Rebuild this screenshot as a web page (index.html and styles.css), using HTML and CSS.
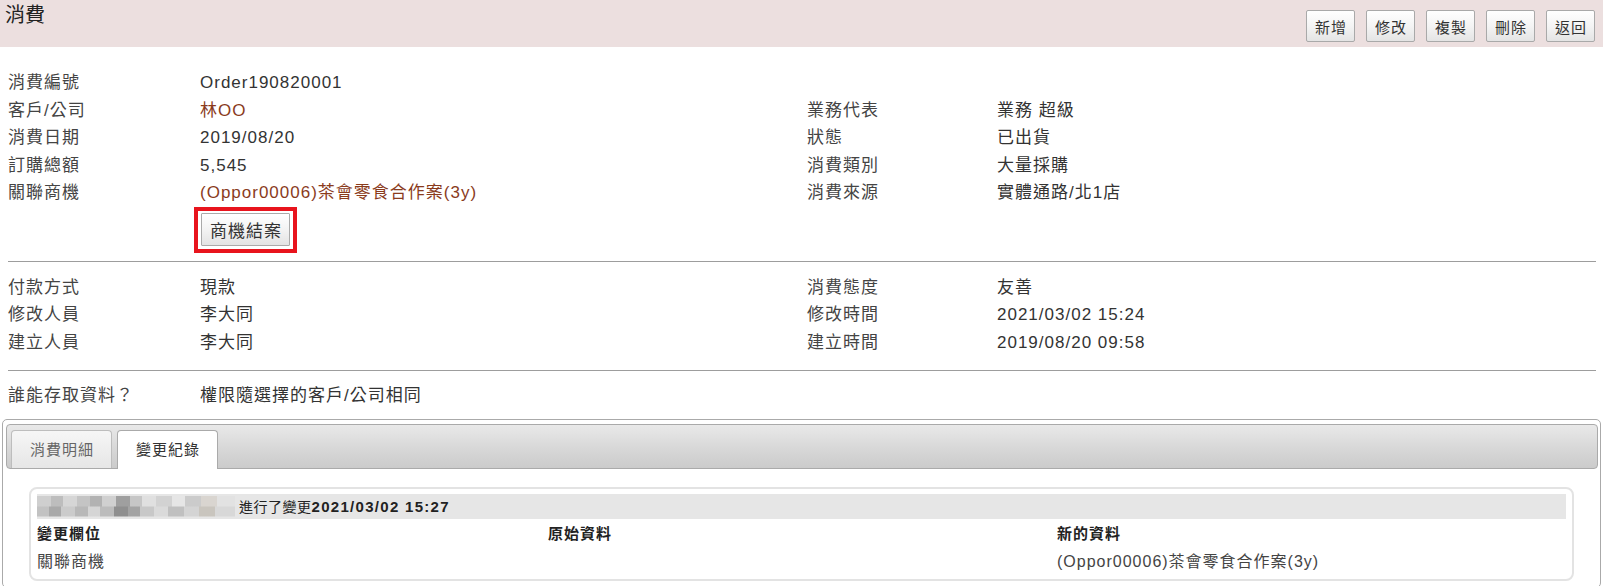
FILE: index.html
```html
<!DOCTYPE html>
<html lang="zh-Hant">
<head>
<meta charset="utf-8">
<title>消費</title>
<link rel="stylesheet" href="styles.css">
</head>
<body>
<header class="topbar">
  <h1 class="title">消費</h1>
  <div class="actions">
    <button class="btn">新增</button>
    <button class="btn">修改</button>
    <button class="btn">複製</button>
    <button class="btn">刪除</button>
    <button class="btn">返回</button>
  </div>
</header>

<main class="info">
  <section class="grid first">
    <div class="lbl">消費編號</div><div class="val">Order190820001</div><div class="lbl"></div><div class="val"></div>
    <div class="lbl">客戶/公司</div><div class="val"><a class="link">林OO</a></div><div class="lbl">業務代表</div><div class="val">業務 超級</div>
    <div class="lbl">消費日期</div><div class="val">2019/08/20</div><div class="lbl">狀態</div><div class="val">已出貨</div>
    <div class="lbl">訂購總額</div><div class="val">5,545</div><div class="lbl">消費類別</div><div class="val">大量採購</div>
    <div class="lbl">關聯商機</div><div class="val"><a class="link">(Oppor00006)茶會零食合作案(3y)</a></div><div class="lbl">消費來源</div><div class="val">實體通路/北1店</div>
    <div class="action-cell"><span class="highlight"><button class="btn-close">商機結案</button></span></div>
  </section>
  <hr class="divider d1">
  <section class="grid second">
    <div class="lbl">付款方式</div><div class="val">現款</div><div class="lbl">消費態度</div><div class="val">友善</div>
    <div class="lbl">修改人員</div><div class="val">李大同</div><div class="lbl">修改時間</div><div class="val">2021/03/02 15:24</div>
    <div class="lbl">建立人員</div><div class="val">李大同</div><div class="lbl">建立時間</div><div class="val">2019/08/20 09:58</div>
  </section>
  <hr class="divider d2">
  <section class="grid third">
    <div class="lbl">誰能存取資料？</div><div class="val">權限隨選擇的客戶/公司相同</div>
  </section>
</main>

<div class="tabs">
  <div class="tabbar">
    <div class="tab">消費明細</div>
    <div class="tab active">變更紀錄</div>
  </div>
  <div class="panel">
    <div class="log">
      <div class="log-head">
        <span class="blur"></span>
        <span class="log-text">進行了變更</span><b class="log-date">2021/03/02 15:27</b>
      </div>
      <div class="log-table">
        <div class="th">變更欄位</div><div class="th">原始資料</div><div class="th">新的資料</div>
        <div class="td">關聯商機</div><div class="td"></div><div class="td">(Oppor00006)茶會零食合作案(3y)</div>
      </div>
    </div>
  </div>
</div>
</body>
</html>
```
FILE: styles.css
```css
* { box-sizing: border-box; }

body {
  margin: 0;
  font-family: "Liberation Sans", "Noto Sans CJK TC", sans-serif;
  color: #333;
  background: #fff;
}

.topbar {
  height: 47px;
  background: #ecdfdf;
  display: flex;
  justify-content: space-between;
  align-items: flex-start;
  margin-right: 1px;
}

.title {
  margin: 0;
  padding: 3px 0 0 5px;
  font-size: 20px;
  line-height: 24px;
  font-weight: normal;
  color: #222;
}

.actions {
  display: flex;
  gap: 11px;
  margin: 10px 8px 0 0;
}

.btn {
  height: 32px;
  padding: 0 7px 0 8px;
  font-family: inherit;
  font-size: 15px;
  letter-spacing: 1px;
  color: #333;
  border: 1px solid #a9a9a9;
  border-radius: 2px;
  background: linear-gradient(#ffffff, #f4f4f4 50%, #e4e4e4);
}

.info {
  padding: 22px 8px 0 8px;
  font-size: 17px;
  letter-spacing: 1px;
}

.grid {
  display: grid;
  grid-template-columns: 192px 607px 190px 1fr;
  line-height: 27.5px;
}

.lbl { color: #444; white-space: nowrap; }
.val { color: #333; white-space: nowrap; }

.link { color: #8a3b1c; text-decoration: none; }

.action-cell {
  grid-column: 2 / span 3;
  margin-top: 0;
  height: 48px;
}

.highlight {
  display: inline-block;
  margin-left: -6px;
  border: 4px solid #e8141d;
  padding: 2px 3px 3px 3px;
  line-height: 0;
}

.btn-close {
  height: 33px;
  padding: 0 7px 0 8px;
  font-family: inherit;
  font-size: 17px;
  letter-spacing: 1px;
  color: #333;
  border: 1px solid #aaa;
  border-radius: 1px;
  background: linear-gradient(#ffffff, #f3f3f3 50%, #e3e3e3);
}

.divider {
  border: 0;
  border-top: 1px solid #9d9d9d;
  margin: 0;
}
.d1 { margin-top: 6px; }
.second { padding-top: 12px; }
.d2 { margin-top: 14px; }
.third { padding-top: 11px; grid-template-columns: 192px 1fr; }

.tabs {
  margin: 9px 3px 0 2px;
  border: 1px solid #aaa;
  border-radius: 5px;
  padding: 4px 2px 0 3px;
}

.tabbar {
  height: 45px;
  border: 1px solid #aaa;
  border-radius: 4px;
  background: linear-gradient(#e9e9e9, #d9d9d9 50%, #cbcbcb);
  display: flex;
  align-items: flex-end;
  gap: 5px;
  padding-left: 4px;
}

.tab {
  height: 38px;
  padding: 0 17px 0 18px;
  font-size: 15px;
  letter-spacing: 1px;
  line-height: 37px;
  color: #666;
  border: 1px solid #bdbdbd;
  border-bottom: 0;
  border-radius: 4px 4px 0 0;
  background: linear-gradient(#f6f6f6, #e6e6e6);
}

.tab.active {
  height: 39px;
  margin-bottom: -1px;
  color: #333;
  background: #fff;
  border-color: #aaa;
}

.panel {
  padding: 18px 24px 6px 23px;
}

.log {
  border: 2px solid #e3e3e3;
  border-radius: 8px;
  padding: 5px 6px 4px 6px;
}

.log-head {
  height: 25px;
  background: #e6e6e6;
  display: flex;
  align-items: center;
  color: #222;
}

.blur {
  width: 198px;
  height: 21px;
  margin-right: 4px;
  background:
    linear-gradient(90deg, #cfcfcf 0 7%, #bdbdbd 7% 13%, #d6d6d6 13% 20%, #c4c4c4 20% 27%, #b2b2b2 27% 33%, #d0d0d0 33% 40%, #9f9f9f 40% 47%, #c6c6c6 47% 53%, #e0e0e0 53% 60%, #d2d2d2 60% 68%, #e6e6e6 68% 75%, #cbcbcb 75% 83%, #d9d5d0 83% 91%, #e2e2e2 91% 100%) top / 100% 50% no-repeat,
    linear-gradient(90deg, #c2c2c2 0 6%, #a9a9a9 6% 12%, #cbcbcb 12% 19%, #b8b8b8 19% 26%, #d5d5d5 26% 32%, #bcbcbc 32% 39%, #8f8f8f 39% 46%, #a3a3a3 46% 52%, #c8c8c8 52% 59%, #dadada 59% 66%, #c0c0c0 66% 74%, #d4d4d4 74% 82%, #c9c5be 82% 90%, #d8d8d8 90% 100%) bottom / 100% 50% no-repeat;
}

.log-text {
  font-size: 14px;
  letter-spacing: 0.5px;
}

.log-date {
  font-size: 15px;
  letter-spacing: 1.3px;
  font-weight: bold;
}

.log-table {
  display: grid;
  grid-template-columns: 511px 509px 1fr;
}

.th {
  font-size: 15px;
  letter-spacing: 1px;
  font-weight: bold;
  line-height: 30px;
  color: #222;
}

.td {
  font-size: 16px;
  letter-spacing: 1px;
  line-height: 26px;
  color: #444;
}
```
